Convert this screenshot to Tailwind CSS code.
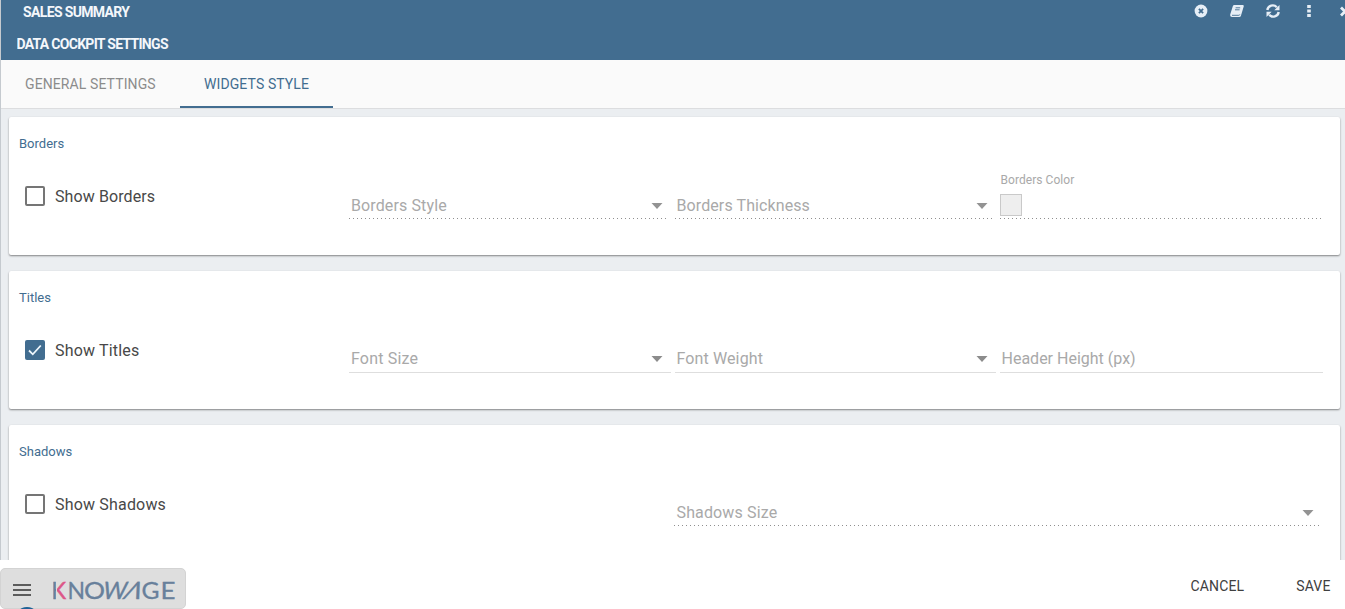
<!DOCTYPE html>
<html lang="en">
<head>
<meta charset="utf-8">
<title>Data Cockpit Settings</title>
<script src="https://cdn.jsdelivr.net/npm/@tailwindcss/browser@4"></script>
</head>
<body class="w-[1345px] h-[609px] overflow-hidden bg-white font-[Roboto,sans-serif]">
<div class="relative flex h-[609px] flex-col overflow-hidden">
  <div class="flex h-[560px] flex-col border-l border-[#c5cacf] bg-[#ebeef1]">
    <header class="h-[60px] shrink-0 bg-[#426d90] text-[#f4f7fb]">
      <div class="flex h-7 items-start justify-between overflow-hidden">
        <h1 class="pl-[22px] pt-[2px] text-[14px] leading-[20px] font-bold whitespace-nowrap"><svg class="block" width="120" height="20" fill="currentColor"><text x="0" y="15" textLength="107" lengthAdjust="spacing">SALES SUMMARY</text></svg></h1>
        <div class="flex h-[22px] w-[151px] shrink-0 items-center text-[#e6eef6]">
          <svg class="mr-[22px] shrink-0" width="14" height="14" viewBox="0 0 14 14"><circle cx="7" cy="7" r="6.4" fill="currentColor"/><path d="M4.9 4.9l4.2 4.2M9.1 4.9l-4.2 4.2" stroke="#426d90" stroke-width="1.8"/></svg>
          <svg class="mr-[22px] shrink-0" width="14" height="14" viewBox="0 0 14 14"><path d="M4.300 1h8.500q1.300.2.900 1.500l-2.700 9q-.4 1.500-1.800 1.500H2Q-.2 12.600.2 10.600L2.800 2.200Q3.200 1 4.300 1z" fill="currentColor"/><path d="M5.600 3.800h4.600M5 5.800h4.600M2 11.300h6.800q.8 0 1-.8" fill="none" stroke="#426d90" stroke-width=".9"/></svg>
          <svg class="mr-[22px] shrink-0" width="14" height="14" viewBox="0 0 14 14"><path d="M1.300 6A5.500 5.500 0 0 1 10.800 3.200M12.700 8A5.500 5.500 0 0 1 3.200 10.800" fill="none" stroke="currentColor" stroke-width="2.400"/><path d="M13.500 1v5.200H8.300zM.5 13V7.800h5.200z" fill="currentColor"/></svg>
          <svg class="mr-[24px] shrink-0" width="14" height="14" viewBox="0 0 14 14"><path d="M5.200 1h3.600v3H5.200zM5.200 5.500h3.600v3H5.200zM5.200 10h3.600v3H5.200z" fill="currentColor"/></svg>
          <svg class="shrink-0" width="12" height="14" viewBox="0 0 12 14"><path d="M1 3.500l8 8M9 3.500l-8 8" stroke="currentColor" stroke-width="2.800"/></svg>
        </div>
      </div>
      <h2 class="pl-[16px] pt-[6px] text-[14px] leading-[20px] font-bold"><svg class="block" width="160" height="20" fill="currentColor"><text x="-0.5" y="15" textLength="152" lengthAdjust="spacing">DATA COCKPIT SETTINGS</text></svg></h2>
    </header>
    <nav class="flex h-[49px] shrink-0 border-b border-[#dcdddf] bg-[#fafafa] text-[14px] leading-[49px]">
      <div class="w-[179px] pl-6 tracking-[0.1px] text-[#8c8c8c]">GENERAL SETTINGS</div>
      <div class="h-[48px] w-[153px] border-b-2 border-[#426d90] pl-6 tracking-[0.1px] text-[#426d90]">WIDGETS STYLE</div>
    </nav>
    <main class="flex flex-col gap-4 overflow-hidden pt-2 pr-[5px] pl-2">
      <section class="h-[138px] shrink-0 rounded-[2px] bg-white pl-[10px] shadow-[0_1px_2px_rgba(0,0,0,0.45)]">
        <h3 class="pt-[18px] text-[13px] leading-[18px] text-[#426d90]">Borders</h3>
        <div class="flex">
          <div class="mt-[33px] ml-[6px] flex h-5 w-[324px] items-center gap-[10px] text-[16px] text-[#484848]"><span class="size-5 rounded-[2px] border-2 border-[#757575]"></span><span class="pt-[2px] tracking-[0.1px]">Show Borders</span></div>
          <div class="mt-[38px] flex h-[28px] w-[320px] items-center justify-between bg-[linear-gradient(to_right,#8f8f8f_1px,transparent_1px)] bg-[length:4px_1px] bg-repeat-x bg-bottom-left pr-[6px] pl-[2px] text-[16px] text-[#a9a9a9]"><span class="pt-[2px] tracking-[0.12px]">Borders Style</span><svg class="mt-px" width="12" height="6"><path d="M.5 0h11L6 6z" fill="#939393"/></svg></div>
          <div class="mt-[38px] ml-[6px] flex h-[28px] w-[320px] items-center justify-between bg-[linear-gradient(to_right,#8f8f8f_1px,transparent_1px)] bg-[length:4px_1px] bg-repeat-x bg-bottom-left pr-[7px] pl-[1.500px] text-[16px] text-[#a9a9a9]"><span class="pt-[2px] tracking-[0.1px]">Borders Thickness</span><svg class="mt-px" width="12" height="6"><path d="M.5 0h11L6 6z" fill="#939393"/></svg></div>
          <div class="mt-[18px] ml-[5px] h-[48px] w-[322px] bg-[linear-gradient(to_right,#8f8f8f_1px,transparent_1px)] bg-[length:4px_1px] bg-repeat-x bg-bottom-left"><div class="pl-[0.5px] text-[12px] leading-[18px] tracking-[0.05px] text-[#a9a9a9]">Borders Color</div><div class="mt-[5px] size-[22px] border border-[#c9c9c9] bg-[#eeeeee]"></div></div>
        </div>
      </section>
      <section class="h-[138px] shrink-0 rounded-[2px] bg-white pl-[10px] shadow-[0_1px_2px_rgba(0,0,0,0.45)]">
        <h3 class="pt-[18px] text-[13px] leading-[18px] text-[#426d90]">Titles</h3>
        <div class="flex">
          <div class="mt-[33px] ml-[6px] flex h-5 w-[324px] items-center gap-[10px] text-[16px] text-[#484848]"><svg width="20" height="20"><rect width="20" height="20" rx="2" fill="#426d90"/><path d="M4 10.500l3.800 3.800 8-8.800" fill="none" stroke="#eef6fc" stroke-width="1.800"/></svg><span class="pt-[2px] tracking-[0.18px]">Show Titles</span></div>
          <div class="mt-[37px] flex h-[29px] w-[322px] items-center justify-between border-b border-[#dedede] pr-[8px] pl-[2px] text-[16px] text-[#a9a9a9]"><span class="pt-[2px] tracking-[0.18px]">Font Size</span><svg class="mt-px" width="12" height="6"><path d="M.5 0h11L6 6z" fill="#8c8c8c"/></svg></div>
          <div class="mt-[37px] ml-[4px] flex h-[29px] w-[321px] items-center justify-between border-b border-[#dedede] pr-[8px] pl-[1.500px] text-[16px] text-[#a9a9a9]"><span class="pt-[2px] tracking-[0.12px]">Font Weight</span><svg class="mt-px" width="12" height="6"><path d="M.5 0h11L6 6z" fill="#8c8c8c"/></svg></div>
          <div class="mt-[37px] ml-[4px] flex h-[29px] w-[323px] items-center border-b border-[#dedede] pl-[1.500px] text-[16px] text-[#a9a9a9]"><span class="pt-[2px]">Header Height (px)</span></div>
        </div>
      </section>
      <section class="h-[138px] shrink-0 rounded-[2px] bg-white pl-[10px] shadow-[0_1px_2px_rgba(0,0,0,0.45)]">
        <h3 class="pt-[18px] text-[13px] leading-[18px] text-[#426d90]">Shadows</h3>
        <div class="flex">
          <div class="mt-[33px] ml-[6px] flex h-5 w-[649px] items-center gap-[10px] text-[16px] text-[#484848]"><span class="size-5 rounded-[2px] border-2 border-[#757575]"></span><span class="pt-[2px] tracking-[0.18px]">Show Shadows</span></div>
          <div class="mt-[37px] flex h-[28px] w-[647px] items-center justify-between bg-[linear-gradient(to_right,#8f8f8f_1px,transparent_1px)] bg-[length:4px_1px] bg-repeat-x bg-bottom-left pr-[7px] pl-[2.500px] text-[16px] text-[#a9a9a9]"><span class="pt-[2px] tracking-[0.14px]">Shadows Size</span><svg class="mt-px" width="12" height="6"><path d="M.5 0h11L6 6z" fill="#939393"/></svg></div>
        </div>
      </section>
    </main>
  </div>
  <footer class="flex h-[49px] shrink-0 items-start justify-between">
    <div class="relative mt-[8px] flex h-[41px] w-[186px] items-center rounded-[5px] border border-[#d3d3d3] bg-[#dedede]">
      <svg class="ml-[12px] mt-[3px] shrink-0" width="18" height="12"><path d="M0 1h18M0 6h18M0 11h18" stroke="#5c5c5c" stroke-width="2"/></svg>
      <svg class="ml-[22px] mt-[3px] shrink-0" width="126" height="32" viewBox="0 -1 126 32" fill="#68809b" stroke="#68809b" stroke-width=".3" font-family="Lato" font-size="24">
        <defs><linearGradient id="k" gradientUnits="userSpaceOnUse" x1="0" y1="0" x2="14" y2="0"><stop offset=".2" stop-color="#68809b"/><stop offset=".2" stop-color="#dedede"/><stop offset=".27" stop-color="#dedede"/><stop offset=".27" stop-color="#dc5687"/></linearGradient></defs>
        <text x="-1.500" y="24" textLength="14.500" lengthAdjust="spacingAndGlyphs" fill="url(#k)" stroke="url(#k)" stroke-width=".5">K</text>
        <text x="14.500" y="24" textLength="17.500" lengthAdjust="spacingAndGlyphs">N</text>
        <text x="31" y="24" textLength="21" lengthAdjust="spacingAndGlyphs">O</text>
        <text transform="translate(48.500 24) skewX(-12)" textLength="24" lengthAdjust="spacingAndGlyphs">W</text>
        <text transform="translate(69 24) skewX(-25)" textLength="17" lengthAdjust="spacingAndGlyphs">Λ</text>
        <text x="88.500" y="24" textLength="18" lengthAdjust="spacingAndGlyphs">G</text>
        <text x="107.500" y="24" textLength="15" lengthAdjust="spacingAndGlyphs">E</text>
      </svg>
      <span class="absolute top-[38px] left-[19px] h-[6px] w-[14px] rounded-[50%] bg-[#1f6296]"></span>
    </div>
    <div class="flex gap-[52px] pt-[16.500px] pr-[14.500px] text-[14px] leading-[19px] tracking-[0.14px] text-[#404040]"><span>CANCEL</span><span>SAVE</span></div>
  </footer>
</div>
</body>
</html>
